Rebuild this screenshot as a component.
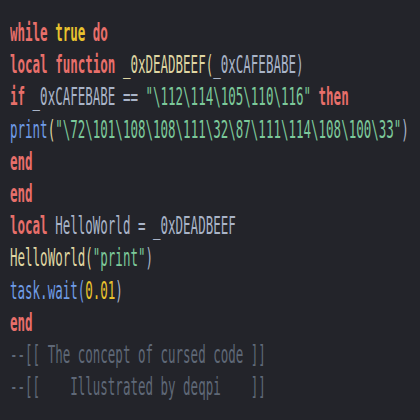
const K = "text-[#e86f6a] font-bold";
const Y = "text-[#e8c22e] font-bold";
const N = "text-[#e8c22e]";
const F = "text-[#dfd6a2]";
const V = "text-[#a9b4c8]";
const S = "text-[#7cc99a]";
const B = "text-[#6f9ce6]";
const C = "text-[#5f6877]";

type Tok = [string, string];

const lines: Tok[][] = [
  [[K, "while"], [V, " "], [Y, "true"], [V, " "], [K, "do"]],
  [[K, "local function"], [V, " "], [F, "_0xDEADBEEF("], [V, "_0xCAFEBABE)"]],
  [[K, "if"], [V, " _0xCAFEBABE == "], [S, "\"\\112\\114\\105\\110\\116\""], [V, " "], [K, "then"]],
  [[B, "print"], [F, "("], [S, "\"\\72\\101\\108\\108\\111\\32\\87\\111\\114\\108\\100\\33\""], [V, ")"]],
  [[K, "end"]],
  [[K, "end"]],
  [[K, "local"], [V, " HelloWorld = _0xDEADBEEF"]],
  [[F, "HelloWorld("], [S, "\"print\""], [V, ")"]],
  [[B, "task.wait("], [N, "0.01"], [V, ")"]],
  [[K, "end"]],
  [[C, "--[[ The concept of cursed code ]]"]],
  [[C, "--[[    Illustrated by deqpi    ]]"]],
];

export default function App() {
  return (
    <div className="w-[420px] h-[420px] bg-[#23242a] overflow-hidden">
      <div
        className="origin-top-left scale-x-[0.5] w-[840px] pt-[17px] pl-[20px] text-[25px] leading-[32.2px] whitespace-pre"
        style={{ fontFamily: '"DejaVu Sans Mono", monospace' }}
      >
        {lines.map((line, i) => (
          <div key={i}>
            {line.map(([cls, txt], j) => (
              <span key={j} className={cls}>
                {txt}
              </span>
            ))}
          </div>
        ))}
      </div>
    </div>
  );
}
